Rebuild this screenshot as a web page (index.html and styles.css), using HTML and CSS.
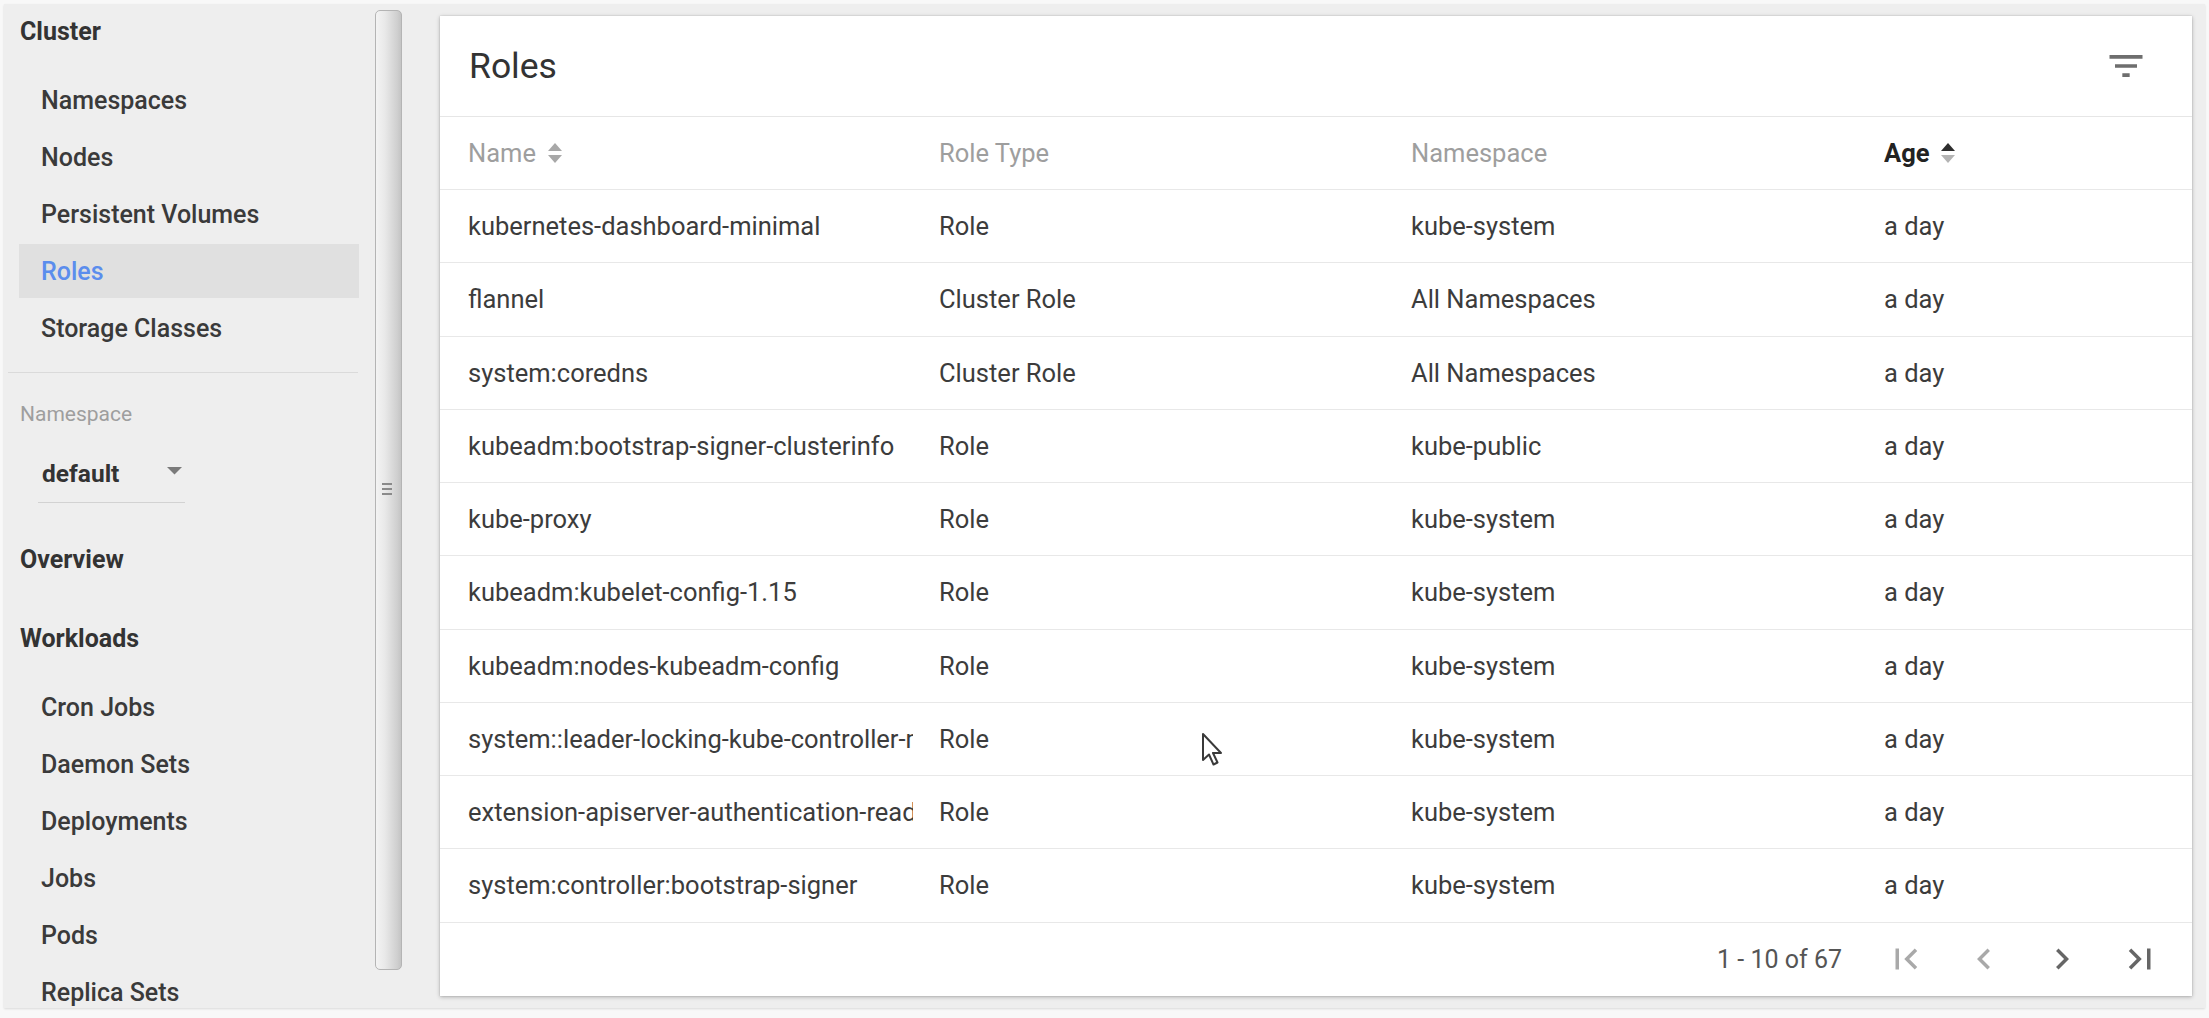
FILE: index.html
```html
<!DOCTYPE html>
<html lang="en">
<head>
<meta charset="utf-8">
<title>Roles - Kubernetes Dashboard</title>
<link rel="stylesheet" href="styles.css">
</head>
<body>
<div class="frame">
  <nav class="sidebar">
    <div class="nav-head">Cluster</div>
    <ul class="nav-list">
      <li class="nav-item">Namespaces</li>
      <li class="nav-item">Nodes</li>
      <li class="nav-item">Persistent Volumes</li>
      <li class="nav-item active">Roles</li>
      <li class="nav-item">Storage Classes</li>
    </ul>
    <div class="divider"></div>
    <div class="ns-label">Namespace</div>
    <div class="ns-select">
      <span class="ns-value">default</span>
      <svg class="ns-arrow" width="15" height="8" viewBox="0 0 15 8"><polygon points="0,0 15,0 7.5,7.5" fill="#7a7a7a"/></svg>
    </div>
    <div class="nav-head overview">Overview</div>
    <div class="nav-head workloads">Workloads</div>
    <ul class="nav-list">
      <li class="nav-item">Cron Jobs</li>
      <li class="nav-item">Daemon Sets</li>
      <li class="nav-item">Deployments</li>
      <li class="nav-item">Jobs</li>
      <li class="nav-item">Pods</li>
      <li class="nav-item">Replica Sets</li>
    </ul>
  </nav>

  <div class="splitter">
    <div class="grip"><span></span><span></span><span></span></div>
  </div>

  <main class="main">
    <section class="card">
      <header class="card-head">
        <h1 class="card-title">Roles</h1>
        <svg class="filter-icon" width="44" height="44" viewBox="0 0 24 24"><path d="M10 18h4v-2h-4v2zM3 6v2h18V6H3zm3 7h12v-2H6v2z" fill="#6e6e6e"/></svg>
      </header>

      <div class="row head-row">
        <div class="cell hcell">Name <svg class="sort" width="14" height="22" viewBox="0 0 14 22"><polygon points="0,9 7,1 14,9" fill="#a8a8a8"/><polygon points="0,13 7,21 14,13" fill="#a8a8a8"/></svg></div>
        <div class="cell hcell">Role Type</div>
        <div class="cell hcell">Namespace</div>
        <div class="cell hcell sorted">Age <svg class="sort" width="14" height="22" viewBox="0 0 14 22"><polygon points="0,9 7,1 14,9" fill="#2e2e2e"/><polygon points="0,13 7,21 14,13" fill="#b4b4b4"/></svg></div>
      </div>

      <div class="row"><div class="cell name">kubernetes-dashboard-minimal</div><div class="cell">Role</div><div class="cell">kube-system</div><div class="cell">a day</div></div>
      <div class="row"><div class="cell name">flannel</div><div class="cell">Cluster Role</div><div class="cell">All Namespaces</div><div class="cell">a day</div></div>
      <div class="row"><div class="cell name">system:coredns</div><div class="cell">Cluster Role</div><div class="cell">All Namespaces</div><div class="cell">a day</div></div>
      <div class="row"><div class="cell name">kubeadm:bootstrap-signer-clusterinfo</div><div class="cell">Role</div><div class="cell">kube-public</div><div class="cell">a day</div></div>
      <div class="row"><div class="cell name">kube-proxy</div><div class="cell">Role</div><div class="cell">kube-system</div><div class="cell">a day</div></div>
      <div class="row"><div class="cell name">kubeadm:kubelet-config-1.15</div><div class="cell">Role</div><div class="cell">kube-system</div><div class="cell">a day</div></div>
      <div class="row"><div class="cell name">kubeadm:nodes-kubeadm-config</div><div class="cell">Role</div><div class="cell">kube-system</div><div class="cell">a day</div></div>
      <div class="row"><div class="cell name">system::leader-locking-kube-controller-manager</div><div class="cell">Role</div><div class="cell">kube-system</div><div class="cell">a day</div></div>
      <div class="row"><div class="cell name">extension-apiserver-authentication-reader</div><div class="cell">Role</div><div class="cell">kube-system</div><div class="cell">a day</div></div>
      <div class="row"><div class="cell name">system:controller:bootstrap-signer</div><div class="cell">Role</div><div class="cell">kube-system</div><div class="cell">a day</div></div>

      <footer class="pager">
        <span class="range">1 - 10 of 67</span>
        <span class="pbtn disabled"><svg width="42" height="42" viewBox="0 0 24 24"><path d="M18.41 16.59L13.82 12l4.590-4.59L17 6l-6 6 6 6zM6 6h2v12H6z"/></svg></span>
        <span class="pbtn disabled"><svg width="42" height="42" viewBox="0 0 24 24"><path d="M15.41 7.41L14 6l-6 6 6 6 1.41-1.41L10.83 12z"/></svg></span>
        <span class="pbtn"><svg width="42" height="42" viewBox="0 0 24 24"><path d="M10 6L8.59 7.41 13.17 12l-4.58 4.59L10 18l6-6z"/></svg></span>
        <span class="pbtn"><svg width="42" height="42" viewBox="0 0 24 24"><path d="M5.59 7.41L10.18 12l-4.59 4.59L7 18l6-6-6-6zM16 6h2v12h-2z"/></svg></span>
      </footer>
    </section>
  </main>

  <svg class="cursor" width="24" height="36" viewBox="0 0 24 36"><path d="M2 2 L2 28 L8 22.5 L12.5 32.5 L16.5 30.5 L12 21 L20 21 Z" fill="#ffffff" stroke="#3a3a3a" stroke-width="2" stroke-linejoin="round"/></svg>
</div>
</body>
</html>
```

FILE: styles.css
```css
* { box-sizing: border-box; }

html, body {
  margin: 0;
  padding: 0;
}

body {
  background: #f8f8f8;
  font-family: Roboto, "Liberation Sans", Arial, sans-serif;
  color: #333;
  width: 2209px;
  height: 1018px;
  overflow: hidden;
}

.frame {
  position: relative;
  margin: 4px 0 0 4px;
  width: 2201px;
  height: 1004px;
  background: #eeeeee;
  display: flex;
  box-shadow: 0 1px 2px rgba(0, 0, 0, 0.12);
}

/* ---------- sidebar ---------- */
.sidebar {
  width: 371px;
  flex: none;
  height: 100%;
  overflow: hidden;
  display: flex;
  flex-direction: column;
}

.nav-head {
  height: 56px;
  line-height: 56px;
  padding-left: 16px;
  font-size: 25px;
  font-weight: 700;
  color: #333;
  flex: none;
}

.nav-list {
  list-style: none;
  margin: 13px 0 0 0;
  padding: 0;
  flex: none;
}

.nav-item {
  height: 54px;
  line-height: 56px;
  margin: 0 0 3px 15px;
  width: 340px;
  padding-left: 22px;
  font-size: 25px;
  font-weight: 500;
  color: #3a3a3a;
  white-space: nowrap;
}

.nav-item.active {
  background: #e0e0e0;
  color: #5b8ded;
}

.divider {
  flex: none;
  height: 1px;
  margin: 14px 0 0 4px;
  width: 350px;
  background: #dadada;
}

.ns-label {
  flex: none;
  margin-top: 26px;
  height: 30px;
  line-height: 30px;
  padding-left: 16px;
  font-size: 21px;
  color: #9e9e9e;
}

.ns-select {
  flex: none;
  margin: 15px 0 0 34px;
  width: 147px;
  height: 59px;
  padding: 0 3px 0 4px;
  border-bottom: 1px solid #d2d2d2;
  display: flex;
  align-items: center;
  justify-content: space-between;
}

.ns-value {
  font-size: 24.5px;
  font-weight: 700;
  color: #333;
}

.ns-arrow { margin-top: -4px; }

.nav-head.overview { margin-top: 29px; }
.nav-head.workloads { margin-top: 23px; }

/* ---------- splitter ---------- */
.splitter {
  flex: none;
  width: 27px;
  height: 960px;
  margin-top: 6px;
  border: 1px solid #b4b4b4;
  border-radius: 5px;
  background: linear-gradient(to right, #f3f3f3 0%, #e9e9e9 35%, #cfcfcf 85%, #c4c4c4 100%);
  display: flex;
  align-items: flex-start;
  justify-content: center;
}

.grip {
  margin-top: 472px;
  display: flex;
  flex-direction: column;
  gap: 3px;
  margin-left: -4px;
}

.grip span {
  display: block;
  width: 10px;
  height: 2px;
  background: #8a8a8a;
}

/* ---------- main ---------- */
.main {
  flex: 1;
  padding: 12px 13px 12px 38px;
  min-width: 0;
}

.card {
  background: #ffffff;
  height: 980px;
  box-shadow: 0 1px 4px rgba(0, 0, 0, 0.28), 0 0 1px rgba(0, 0, 0, 0.2);
  display: flex;
  flex-direction: column;
}

.card-head {
  height: 101px;
  flex: none;
  border-bottom: 1px solid #e6e6e6;
  display: flex;
  align-items: center;
  justify-content: space-between;
  padding: 0 44px 0 29px;
}

.card-title {
  margin: 0;
  font-size: 35.5px;
  font-weight: 400;
  color: #333;
}

.filter-icon { display: block; }

.row {
  flex: none;
  display: grid;
  grid-template-columns: 471px 472px 473px 1fr;
  align-items: center;
  height: 73.25px;
  padding-left: 28px;
  border-bottom: 1px solid #e8e8e8;
}

.row.head-row { height: 73px; }

.cell {
  font-size: 25.5px;
  color: #3c3c3c;
  white-space: nowrap;
  overflow: hidden;
  text-overflow: clip;
  margin-right: 26px;
  min-width: 0;
}

.hcell {
  color: #9e9e9e;
  display: flex;
  align-items: center;
  gap: 12px;
}

.hcell.sorted {
  color: #222;
  font-weight: 700;
}

.sort { display: block; }

.pager {
  flex: 1;
  display: flex;
  align-items: center;
  justify-content: flex-end;
  padding-right: 13px;
}

.range {
  font-size: 25px;
  color: #555;
  margin-right: 25px;
}

.pbtn {
  width: 78px;
  height: 60px;
  display: flex;
  align-items: center;
  justify-content: center;
}

.pbtn svg { fill: #666; display: block; }
.pbtn.disabled svg { fill: #a9a9a9; }

/* mouse pointer captured in the screenshot */
.cursor {
  position: absolute;
  left: 1197px;
  top: 728px;
}
```
